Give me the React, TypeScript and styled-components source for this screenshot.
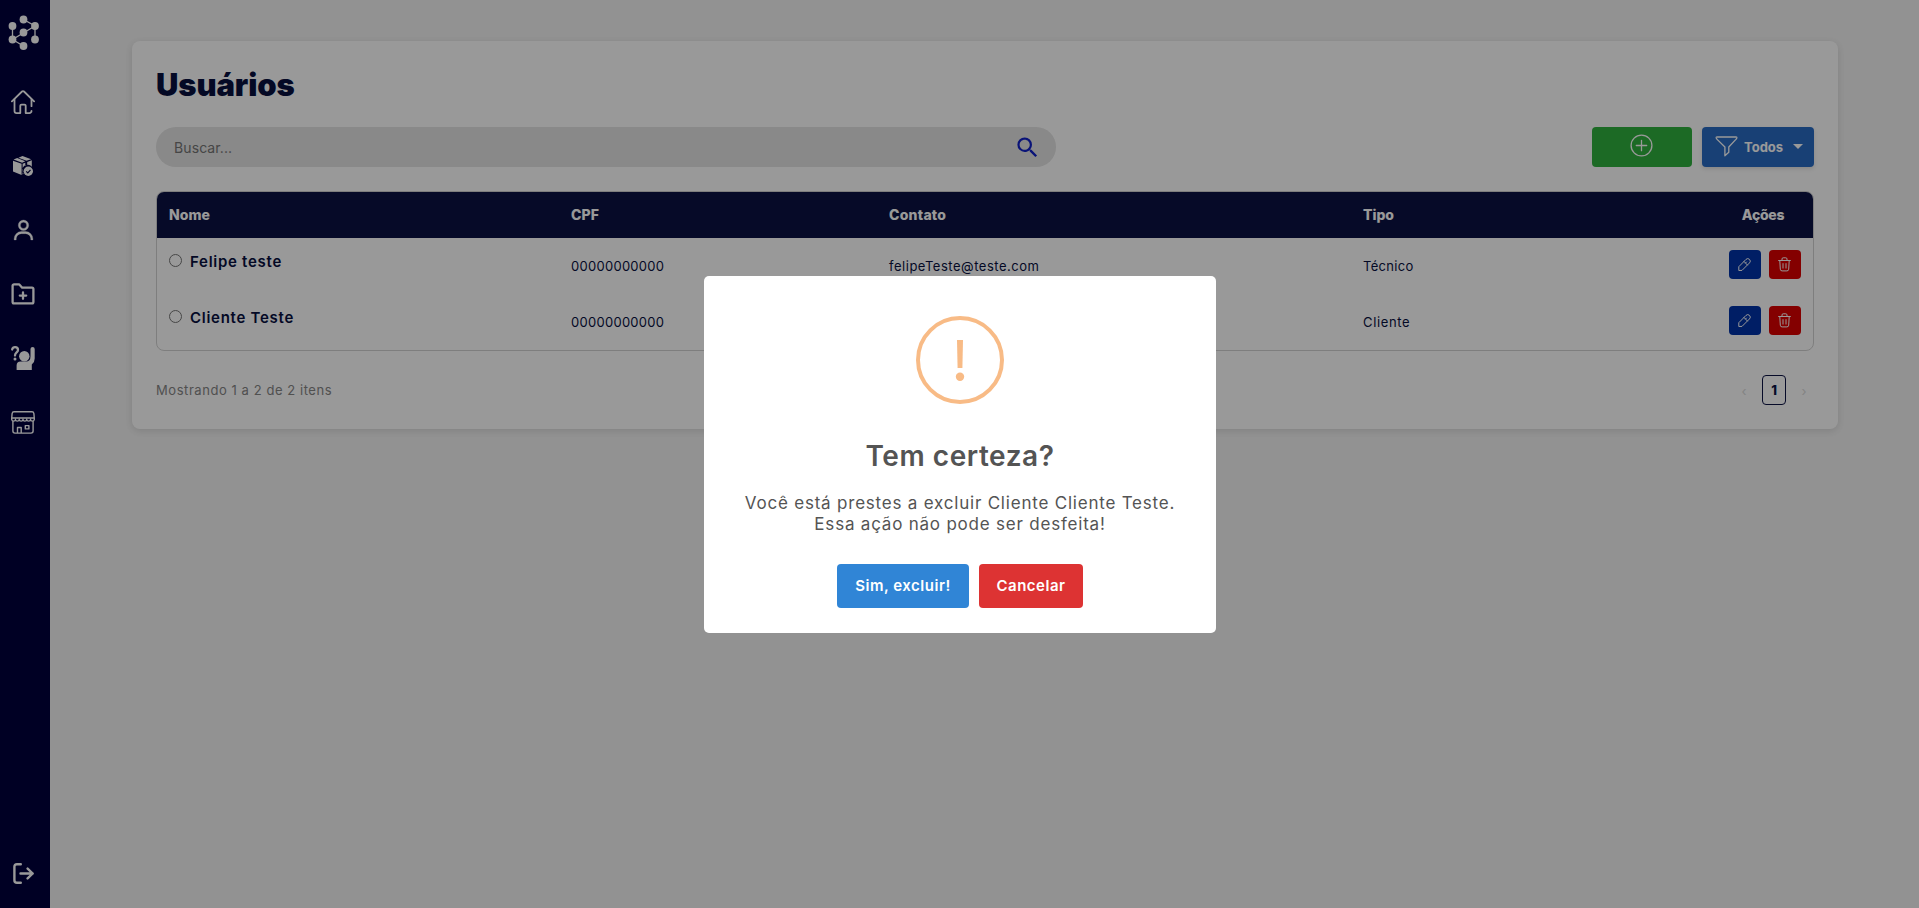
import React from "react";
import styled, { createGlobalStyle } from "styled-components";
import { BiUser } from "react-icons/bi";
import { MdSearch } from "react-icons/md";

const GlobalStyle = createGlobalStyle`
  *, *::before, *::after { box-sizing: border-box; }
  body {
    margin: 0;
    background: #f4f4f4;
    font-family: Inter, "Open Sans", sans-serif;
    font-size: 13px;
    color: #08103f;
    overflow: hidden;
  }
  button, input { font: inherit; }
`;

const Page = styled.div`
  display: flex;
  height: 100vh;
`;

const Sidebar = styled.nav`
  width: 50px;
  flex: none;
  display: flex;
  flex-direction: column;
  background: #00003d;
  color: #fff;
  padding: 12px 4px 15px 0;
`;

const LogoLink = styled.a`
  height: 42px;
  display: flex;
  justify-content: center;
  align-items: center;
`;

const NavList = styled.div`
  display: flex;
  flex-direction: column;
  flex: 1;
  margin-top: 16px;
`;

const NavItem = styled.a<{ $last?: boolean }>`
  height: ${(p) => (p.$last ? "40px" : "64px")};
  margin-top: ${(p) => (p.$last ? "auto" : "0")};
  display: flex;
  justify-content: center;
  align-items: center;

  svg { display: block; }
`;

const Main = styled.main`
  flex: 1;
  padding: 41px 81px 0 82px;
`;

const Card = styled.section`
  display: flex;
  flex-direction: column;
  gap: 24px;
  padding: 24px;
  background: #fff;
  border-radius: 8px;
  box-shadow: 0 2px 8px rgba(0, 0, 0, 0.12);
`;

const Title = styled.h1`
  margin: 0;
  padding-top: 1px;
  height: 38px;
  font-size: 31px;
  line-height: 38px;
  font-weight: 900;
  letter-spacing: -0.1px;
`;

const Toolbar = styled.div`
  display: flex;
  height: 40px;
  gap: 10px;
`;

const SearchBox = styled.label`
  display: flex;
  align-items: center;
  width: 900px;
  margin-right: auto;
  padding: 1px 15px 0 18px;
  border-radius: 20px;
  background: #e4e4e4;
  color: #1020c8;
`;

const SearchInput = styled.input`
  flex: 1;
  padding: 0;
  border: 0;
  outline: 0;
  background: none;
  font-size: 14px;
  letter-spacing: 0.1px;
  &::placeholder { color: #757575; opacity: 1; }
`;

const AddButton = styled.button`
  width: 100px;
  padding: 0 2px 3px 0;
  display: flex;
  align-items: center;
  justify-content: center;
  border: 0;
  border-radius: 4px;
  background: #30b13f;
  color: #fff;
`;

const FilterButton = styled.button`
  width: 112px;
  padding: 0 11px 0 13px;
  display: flex;
  align-items: center;
  border: 0;
  border-radius: 4px;
  background: #286bc4;
  box-shadow: 0 2px 4px rgba(0, 0, 0, 0.12);
  color: #fff;
  font-size: 13px;
  font-weight: 700;

  svg { margin-bottom: 2px; }
`;

const FilterLabel = styled.span`
  margin-left: 6px;
`;

const Caret = styled.span`
  margin: 0 0 1px auto;
  border: 5px solid transparent;
  border-top: 5px solid #fff;
  border-bottom: 0;
`;

const Table = styled.div`
  border: 1px solid #d3d3d3;
  border-radius: 8px;
  overflow: hidden;
`;

const Row = styled.div`
  display: grid;
  grid-template-columns: 402px 318px 474px 366px 96px;
  height: 56px;
  align-items: center;
`;

const HeaderRow = styled(Row)`
  height: 46px;
  padding-bottom: 2px;
  background: #0a1244;
  color: #fff;
  font-size: 14px;
  font-weight: 800;
`;

const Cell = styled.div<{ $space?: number; $align?: string }>`
  padding: ${(p) => (p.$align ? "0 14px 0 10px" : "0 12px")};
  letter-spacing: ${(p) => p.$space ?? 0}px;
  text-align: ${(p) => p.$align ?? "left"};
`;

const NameCell = styled.label`
  align-self: start;
  display: flex;
  padding: 14px 12px 0;
  gap: 8px;
  font-size: 15px;
  line-height: 20px;
  font-weight: 600;
  letter-spacing: 0.72px;
`;

const Radio = styled.input`
  width: 13px;
  height: 13px;
  margin: 2px 0 0;
`;

const Actions = styled.div`
  align-self: start;
  display: flex;
  gap: 8px;
  padding: 12px 12px 0;
`;

const ActionButton = styled.button<{ $tone: string }>`
  width: 32px;
  height: 29px;
  padding: 0 1px 0 0;
  display: grid;
  place-items: center;
  border: 0;
  border-radius: 4px;
  background: ${(p) => p.$tone};
  color: #fff;
`;

const Footer = styled.footer`
  display: flex;
  align-items: center;
  justify-content: space-between;
  color: #868686;
  letter-spacing: 0.56px;
`;

const Pagination = styled.div`
  display: flex;
  align-items: center;
  gap: 8px;
  letter-spacing: 0;
`;

const PageArrow = styled.span`
  width: 20px;
  padding-top: 1px;
  text-align: center;
  color: #dadada;
`;

const PageNumber = styled.span`
  width: 24px;
  height: 30px;
  display: grid;
  place-items: center;
  border: 1px solid #0a1244;
  border-radius: 4px;
  color: #0a1244;
  font-weight: 800;
`;

const Overlay = styled.div`
  position: fixed;
  inset: 0;
  display: flex;
  align-items: center;
  justify-content: center;
  padding: 1px 0 0 1px;
  background: rgba(0, 0, 0, 0.4);
`;

const Dialog = styled.div`
  width: 512px;
  height: 357px;
  padding-top: 40px;
  display: flex;
  flex-direction: column;
  align-items: center;
  border-radius: 5px;
  background: #fff;
  color: #545454;
`;

const DialogTitle = styled.h2`
  margin: 32px 0 0;
  font-size: 28px;
  line-height: 40px;
  font-weight: 600;
  letter-spacing: 0.55px;
`;

const DialogText = styled.p`
  margin: 17px 0 0;
  font-size: 17px;
  line-height: 21px;
  letter-spacing: 0.79px;
  text-align: center;
`;

const DialogActions = styled.div`
  display: flex;
  gap: 10px;
  margin-top: 29px;
`;

const DialogButton = styled.button<{ $tone: string; $width: number }>`
  width: ${(p) => p.$width}px;
  height: 44px;
  padding: 0 0 1px;
  border: 0;
  border-radius: 4px;
  background: ${(p) => p.$tone};
  color: #fff;
  font-size: 15px;
  font-weight: 600;
  letter-spacing: 0.52px;
`;

const Stroke = {
  fill: "none",
  stroke: "currentColor",
  strokeLinecap: "round",
  strokeLinejoin: "round",
} as const;

const nodes = [[15.5, 4.5], [4.5, 11], [27, 11], [15.5, 17.5], [4.5, 24.5], [27, 24.5], [15.5, 31]];

const LogoIcon = () => (
  <svg width="31" height="36" viewBox="0 0 31 36">
    <path d="M15.5 4.5 27 11v13.500M27 11 4.500 24.500 15.500 31M4.500 11v13.500" fill="none" stroke="#fff" strokeWidth="1.300" />
    {nodes.map(([x, y], i) => (
      <circle key={i} cx={x} cy={y} r="3.900" fill="#fff" />
    ))}
  </svg>
);

const HomeIcon = () => (
  <svg width="24" height="24" viewBox="0 0 24 24" {...Stroke} strokeWidth="1.8">
    <path d="M.9 11.400 11 1.500a1.400 1.400 0 0 1 2 0L23.100 11.400" />
    <path d="M3.500 9.500v11.500a2.100 2.100 0 0 0 2.100 2.100h3.700v-7.300a1.200 1.200 0 0 1 1.200-1.200h3a1.200 1.200 0 0 1 1.200 1.200v7.300h3.700a2.100 2.100 0 0 0 2.100-2.100M20.500 9.500v6.700" />
  </svg>
);

const BoxIcon = () => (
  <svg width="20" height="20" viewBox="0 0 20 20" fill="currentColor">
    <path d="M.6 3.500 4.200 2.100 12.300 5.200 9.100 6.700ZM5.400 1.700 9.500.1 18.200 3.200 13.500 4.700ZM0 4.700 8.600 7.800V19L0 15.500ZM9.600 7.800 12.300 6.700V9.600L14.200 8.800V5.900L18.800 4.300V10.700A5.400 5.400 0 0 0 10.500 17.800L9.600 18.600Z" />
    <circle cx="15.300" cy="15.300" r="4.700" />
    <path d="m13.200 15.400 1.600 1.500 2.700-3" fill="none" stroke="#00003d" strokeWidth="1.200" />
  </svg>
);

const FolderIcon = () => (
  <svg width="24" height="22" viewBox="0 0 24 22" {...Stroke} strokeWidth="2.3">
    <path d="M1.600 19V2.800A1.400 1.400 0 0 1 3 1.400h5.300l2.900 3.300H21a1.400 1.400 0 0 1 1.400 1.400V19a1.400 1.400 0 0 1-1.400 1.400H3A1.400 1.400 0 0 1 1.600 19Z" />
    <path d="M12 9.400v6.400M8.800 12.600h6.400" />
  </svg>
);

const HelpPersonIcon = () => (
  <svg width="24" height="24" viewBox="0 0 24 24">
    <circle cx="13.300" cy="10.200" r="5.200" fill="currentColor" />
    <path d="M5.600 24v-4.500q0-4 4-4h5.300q4.600 0 4.600-5.300V3a2.100 2.100 0 0 1 4.200 0v9.500q0 3.900-2.900 6.100V24Z" fill="currentColor" />
    <path d="M1.200 3.600C1.200.3 7 .3 7 3.900 7 6.500 4 6.300 4 9.500" {...Stroke} strokeWidth="2.300" />
    <circle cx="4" cy="13" r="1.500" fill="currentColor" />
  </svg>
);

const StoreIcon = () => (
  <svg width="24" height="23" viewBox="0 0 24 23" {...Stroke} strokeWidth="1.4">
    <path d="M3 .7h18q1.600 0 1.900 1.900l.4 4.700v1.200a1.900 1.900 0 0 1-3.770 0 1.900 1.900 0 0 1-3.770 0 1.900 1.900 0 0 1-3.770 0 1.900 1.900 0 0 1-3.770 0 1.900 1.900 0 0 1-3.770 0 1.900 1.900 0 0 1-3.750 0V7.300l.4-4.700Q1.400.7 3 .7ZM.7 7h22.600" />
    <path d="M1.900 10.500V20a2.100 2.100 0 0 0 2.100 2.100h16a2.100 2.100 0 0 0 2.100-2.100v-9.500M6.500 22v-5.500h3.700V22M14.300 14.600h3.600v3.300h-3.600Z" />
  </svg>
);

const LogoutIcon = () => (
  <svg width="21" height="21" viewBox="0 0 21 21" {...Stroke} strokeWidth="2.400">
    <path d="M7.800 1.200H4Q1.400 1.200 1.400 3.800v13.400q0 2.600 2.600 2.600h3.800M7.500 10.500H19.700M14.600 5.600l5.100 4.900-5.100 4.900" />
  </svg>
);

const PlusCircleIcon = () => (
  <svg width="23" height="23" viewBox="0 0 23 23" {...Stroke} strokeWidth="1.300">
    <circle cx="11.500" cy="11.500" r="10.400" />
    <path d="M11.500 6.300v10.400M6.300 11.500h10.400" />
  </svg>
);

const FunnelIcon = () => (
  <svg width="23" height="21" viewBox="0 0 23 21" {...Stroke} strokeWidth="1.300">
    <path d="M1.900 1h19.200q1 0 .7.900-.3.800-.9 1.500L13.800 11v5.200L9.900 19.700V11L2.100 3.400q-.7-.7-.9-1.500Q1 1 1.900 1Z" />
  </svg>
);

const PencilIcon = () => (
  <svg width="13" height="13" viewBox="0 0 13 13" {...Stroke} strokeWidth="1">
    <path d="M.8 12.100V8.700L8 1.400a2.450 2.450 0 0 1 3.500 3.500L4.300 12.100ZM6 3.500 9.400 7M7.500 5l1-1" />
  </svg>
);

const TrashIcon = () => (
  <svg width="13" height="15" viewBox="0 0 13 15" {...Stroke} strokeWidth="1">
    <path d="M.6 3.500h11.800M4 3.300V2q0-1.200 1.200-1.200h2.600Q9 .8 9 2v1.300M1.800 3.700l.5 8.500q.1 1.700 1.800 1.700h4.800q1.700 0 1.800-1.700l.5-8.500M5 6.600v4.500M8 6.600v4.500" />
  </svg>
);

const WarningIcon = () => (
  <svg width="88" height="88" viewBox="0 0 88 88" fill="#f8bb86">
    <circle cx="44" cy="44" r="42" fill="none" stroke="#f8bb86" strokeWidth="4" />
    <path d="M41 24h6l-.6 28h-4.800Z" />
    <circle cx="44" cy="60.700" r="4.200" />
  </svg>
);

const UserIcon = styled(BiUser)`
  stroke: currentColor;
  stroke-width: 0.3px;
`;

const users = [
  { name: "Felipe teste", cpf: "00000000000", contact: "felipeTeste@teste.com", type: "Técnico" },
  { name: "Cliente Teste", cpf: "00000000000", contact: "clienteTeste@teste.com", type: "Cliente" },
];

export default function App() {
  return (
    <>
      <GlobalStyle />
      <Page>
        <Sidebar>
          <LogoLink><LogoIcon /></LogoLink>
          <NavList>
            <NavItem><HomeIcon /></NavItem>
            <NavItem><BoxIcon /></NavItem>
            <NavItem><UserIcon size={25} /></NavItem>
            <NavItem><FolderIcon /></NavItem>
            <NavItem><HelpPersonIcon /></NavItem>
            <NavItem><StoreIcon /></NavItem>
            <NavItem $last><LogoutIcon /></NavItem>
          </NavList>
        </Sidebar>
        <Main>
          <Card>
            <Title>Usuários</Title>
            <Toolbar>
              <SearchBox>
                <SearchInput placeholder="Buscar..." />
                <MdSearch size={27} />
              </SearchBox>
              <AddButton><PlusCircleIcon /></AddButton>
              <FilterButton>
                <FunnelIcon />
                <FilterLabel>Todos</FilterLabel>
                <Caret />
              </FilterButton>
            </Toolbar>
            <Table>
              <HeaderRow>
                <Cell $space={0.05}>Nome</Cell>
                <Cell $space={0.1}>CPF</Cell>
                <Cell $space={0.25}>Contato</Cell>
                <Cell>Tipo</Cell>
                <Cell $space={-0.3} $align="center">Ações</Cell>
              </HeaderRow>
              {users.map((u) => (
                <Row key={u.name}>
                  <NameCell><Radio type="radio" name="user" />{u.name}</NameCell>
                  <Cell $space={0.28}>{u.cpf}</Cell>
                  <Cell $space={0.52}>{u.contact}</Cell>
                  <Cell $space={u.type === "Cliente" ? 0.65 : 0.3}>{u.type}</Cell>
                  <Actions>
                    <ActionButton $tone="#0032a8"><PencilIcon /></ActionButton>
                    <ActionButton $tone="#dc0000"><TrashIcon /></ActionButton>
                  </Actions>
                </Row>
              ))}
            </Table>
            <Footer>
              <span>Mostrando 1 a 2 de 2 itens</span>
              <Pagination>
                <PageArrow>‹</PageArrow>
                <PageNumber>1</PageNumber>
                <PageArrow>›</PageArrow>
              </Pagination>
            </Footer>
          </Card>
        </Main>
      </Page>
      <Overlay>
        <Dialog role="dialog">
          <WarningIcon />
          <DialogTitle>Tem certeza?</DialogTitle>
          <DialogText>
            Você está prestes a excluir Cliente Cliente Teste.
            <br />
            Essa ação não pode ser desfeita!
          </DialogText>
          <DialogActions>
            <DialogButton $tone="#3085d6" $width={132}>Sim, excluir!</DialogButton>
            <DialogButton $tone="#dd3333" $width={104}>Cancelar</DialogButton>
          </DialogActions>
        </Dialog>
      </Overlay>
    </>
  );
}
